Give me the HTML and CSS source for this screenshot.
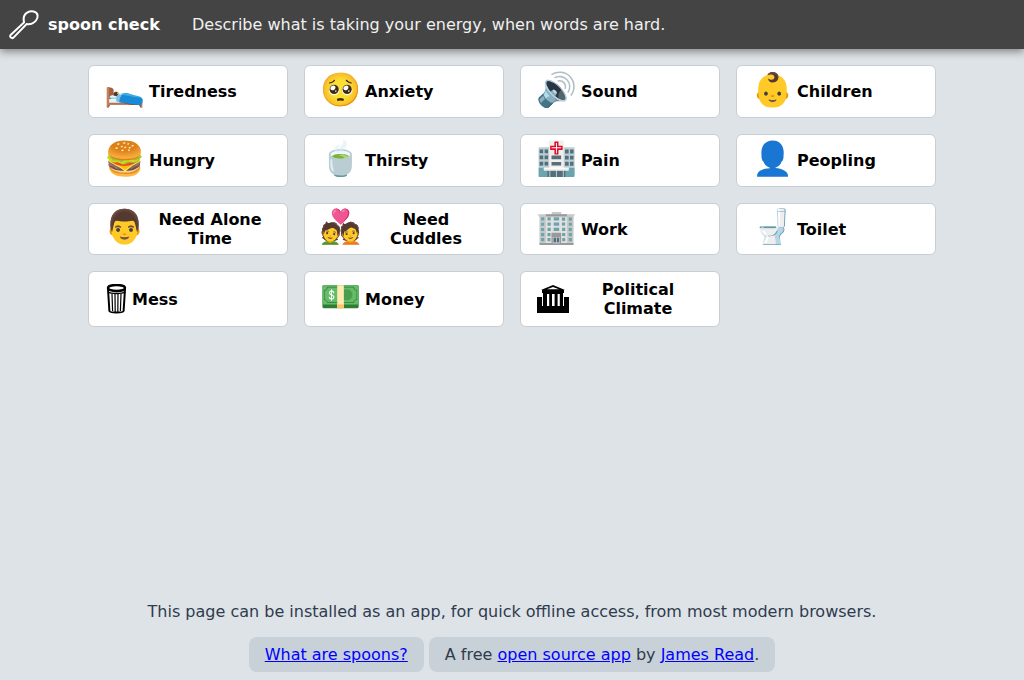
FILE: index.html
```html
<!doctype html>
<html lang="en">
<head>
	<meta charset="UTF-8">
	<title>spoon check</title>
	<link rel="stylesheet" href="styles.css">
</head>
<body>
	<header class="topbar">
		<svg class="logo" width="32" height="32" viewBox="0 0 32 32" fill="none" stroke="#fff" stroke-width="2">
			<path d="M2.6 26 L16 13.5 C15 9 16.5 5 19.5 3.4 C23 1.6 29 2 29.6 6.5 C30 10 27 13.6 23.5 14.8 C21.5 15.4 20 15.3 18.6 15 L5.5 28.6 C4 30 1 28 2.6 26 Z"/>
		</svg>
		<span class="brand">spoon check</span>
		<span class="tagline">Describe what is taking your energy, when words are hard.</span>
	</header>

	<main class="grid">
		<button class="card"><span class="icon">🛌</span><span>Tiredness</span></button>
		<button class="card"><span class="icon">🥺</span><span>Anxiety</span></button>
		<button class="card"><span class="icon">🔊</span><span>Sound</span></button>
		<button class="card"><span class="icon">👶</span><span>Children</span></button>
		<button class="card"><span class="icon">🍔</span><span>Hungry</span></button>
		<button class="card"><span class="icon">🍵</span><span>Thirsty</span></button>
		<button class="card"><span class="icon">🏥</span><span>Pain</span></button>
		<button class="card"><span class="icon">👤</span><span>Peopling</span></button>
		<button class="card"><span class="icon">👨</span><span>Need Alone Time</span></button>
		<button class="card"><span class="icon">💑</span><span>Need Cuddles</span></button>
		<button class="card"><span class="icon">🏢</span><span>Work</span></button>
		<button class="card"><span class="icon">🚽</span><span>Toilet</span></button>
		<button class="card">
			<svg class="glyph" width="23" height="30" viewBox="0 0 23 30" fill="none" stroke="#000">
				<path stroke-width="2" d="M3 5 L4.4 27 C4.6 29 18.4 29 18.6 27 L20 5"/>
				<ellipse stroke-width="2.4" cx="11.5" cy="4" rx="8.5" ry="3"/>
				<path d="M3 8 C6 10 17 10 20 8" stroke-width="1.5"/>
				<path d="M7 10 L7.6 27 M10 10 L10.2 28 M13 10 L12.8 28 M16 10 L15.4 27" stroke-width="1.2"/>
			</svg>
			<span>Mess</span>
		</button>
		<button class="card"><span class="icon">💵</span><span>Money</span></button>
		<button class="card">
			<svg class="glyph" width="32" height="28" viewBox="0 0 32 28">
				<path d="M16 0 L4 5 H28 Z M5 5 H27 V8 H5 Z M0 12 H32 V28 H0 Z"/>
				<path fill="#fff" d="M16 2 L10 4.2 H22 Z M5 12 H6 V21 H5 Z M26 12 H27 V21 H26 Z"/>
				<path d="M6 8 H26 V21 H6 Z"/>
				<path fill="#fff" d="M10 9 H12.2 V21 H10 Z M15 9 H17.6 V21 H15 Z M20.6 9 H22.8 V21 H20.6 Z"/>
			</svg>
			<span>Political Climate</span>
		</button>
	</main>

	<footer class="foot">
		<p class="note">This page can be installed as an app, for quick offline access, from most modern browsers.</p>
		<div class="pills">
			<span class="pill"><a href="#">What are spoons?</a></span>
			<span class="pill">A free <a href="#">open source app</a> by <a href="#">James Read</a>.</span>
		</div>
	</footer>
</body>
</html>
```

FILE: styles.css
```css
*{
	box-sizing: border-box;
	padding:0;
	margin:0;
}
html,body{
	height:100%;
}
body{
	display: flex;
	flex-direction: column;
	background: #dee3e7;
	color: #2f3b4e;
	font:16px/24px 'DejaVu Sans', sans-serif;
	overflow: hidden;
}
a{
	color: #00f;
}
.topbar{
	display: flex;
	align-items: center;
	height:49px;
	padding-left:8px;
	background: #444;
	color: #fff;
	box-shadow: 0 3px 8px rgba(0,0,0,.4);
}
.logo{
	margin-right:8px;
}
.brand{
	width:144px;
	font-weight: bold;
}
.tagline{
	color: #f0f0f0;
}
.grid{
	display: grid;
	grid-template-columns: repeat(4,200px);
	grid-template-rows: 53px 53px 52px 56px;
	gap:16px;
	justify-content: center;
	align-content: start;
	flex:1;
	padding-top:16px;
}
.card{
	display: flex;
	align-items: center;
	padding:0 16px;
	background: #fff;
	border:1px solid #c8ced3;
	border-radius: 6px;
	color: #000;
	font:bold 16px/19px 'DejaVu Sans', sans-serif;
	text-align: center;
}
.icon{
	flex-shrink: 0;
	width:41px;
	margin:0 4px 4px -1px;
	font-size:33px;
	line-height:36px;
}
.glyph{
	flex-shrink: 0;
	margin-right:4px;
}
.foot{
	text-align: center;
}
.note{
	margin-bottom:13px;
}
.pills{
	display: flex;
	justify-content: center;
	gap:5px;
	margin-bottom:8px;
}
.pill{
	padding:6px 16px 5px;
	background: #c8d1d7;
	border-radius: 8px;
}
```
